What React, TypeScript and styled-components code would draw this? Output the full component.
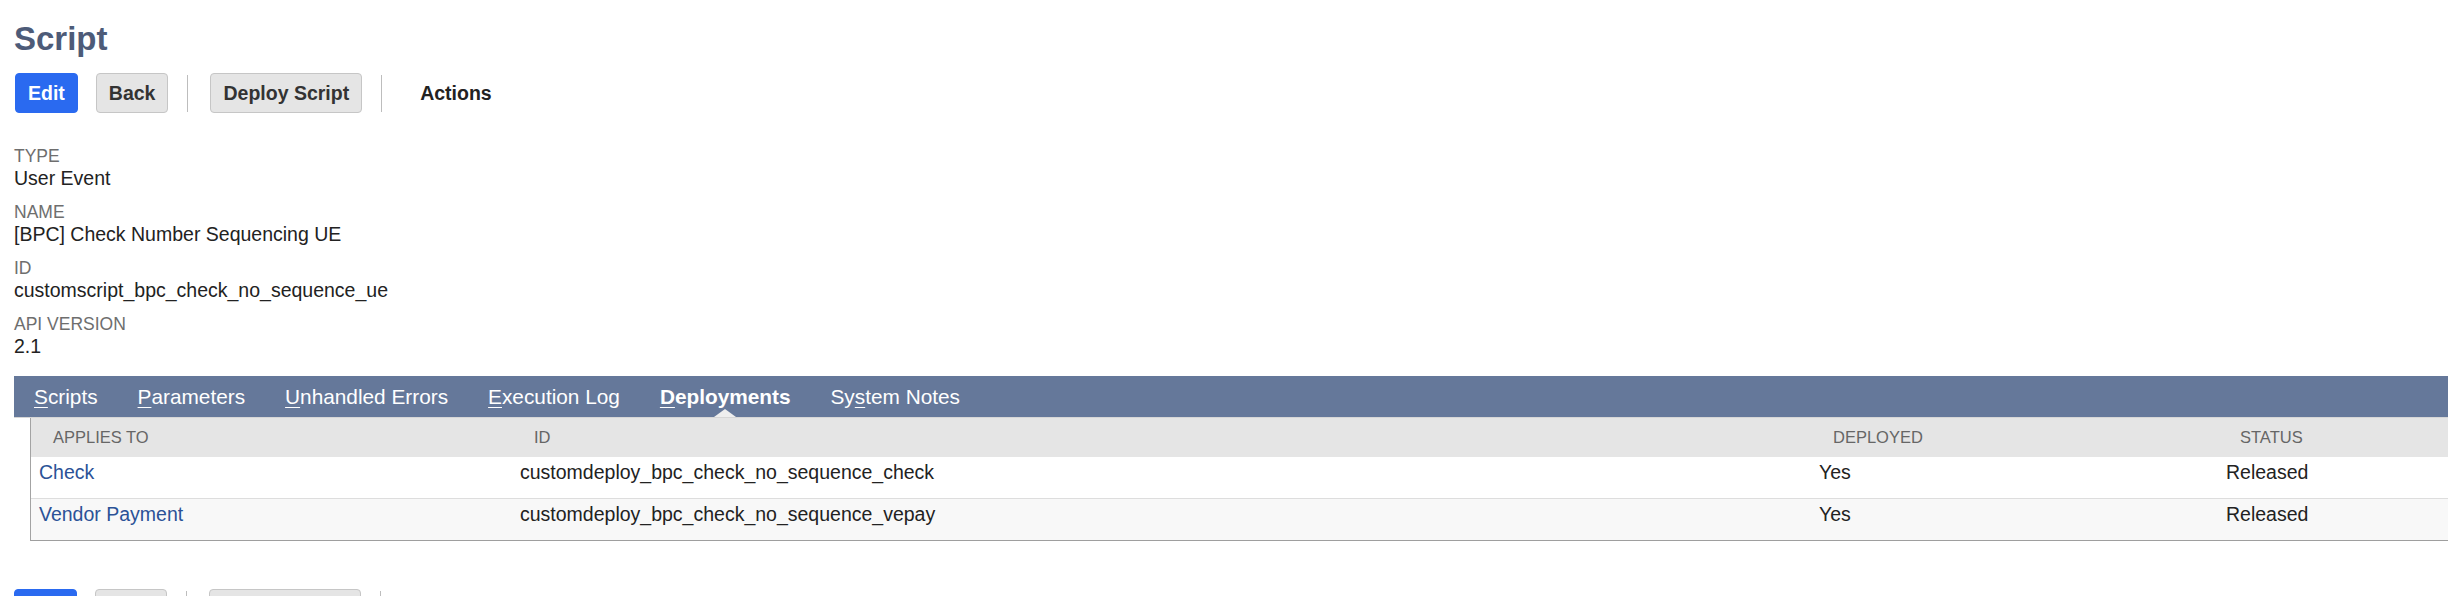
import React from "react";
import styled, { createGlobalStyle } from "styled-components";

const GlobalStyle = createGlobalStyle`
  html, body {
    margin: 0;
    padding: 0;
    background: #ffffff;
    overflow: hidden;
  }
  body {
    font-family: "Liberation Sans", Arial, Helvetica, sans-serif;
    color: #222222;
  }
`;

const Page = styled.div`
  padding: 19px 0 0 14px;
  width: 2434px;
`;

const Title = styled.h1`
  margin: 0;
  font-size: 33px;
  line-height: 40px;
  font-weight: 700;
  color: #4d5b78;
`;

const ButtonRow = styled.div<{ $top: number }>`
  display: flex;
  align-items: center;
  gap: 18px;
  height: 40px;
  margin-top: ${(p) => p.$top}px;
  padding-left: 1px;
`;

const Button = styled.button<{ $variant: "primary" | "secondary" | "plain" }>`
  box-sizing: border-box;
  height: 40px;
  padding: 0 12px;
  margin-left: ${(p) => (p.$variant === "plain" ? "3px" : "0")};
  border-radius: 4px;
  font-family: "Liberation Sans", Arial, sans-serif;
  font-size: 19.5px;
  font-weight: 700;
  cursor: pointer;
  border: 1px solid
    ${(p) =>
      p.$variant === "primary"
        ? "#2a6af0"
        : p.$variant === "secondary"
        ? "#c6c6c6"
        : "transparent"};
  background: ${(p) =>
    p.$variant === "primary"
      ? "#2a6af0"
      : p.$variant === "secondary"
      ? "#e5e5e5"
      : "transparent"};
  color: ${(p) =>
    p.$variant === "primary" ? "#ffffff" : p.$variant === "secondary" ? "#333333" : "#222222"};
`;

const Separator = styled.span`
  display: block;
  width: 1px;
  height: 37px;
  background: #bdbdbd;
  margin: 0 4px 0 1px;
`;

const Fields = styled.div`
  margin-top: 33px;
  display: flex;
  flex-direction: column;
  gap: 11px;
`;

const Field = styled.div`
  display: flex;
  flex-direction: column;
`;

const Label = styled.div`
  font-size: 17.5px;
  line-height: 20px;
  color: #6e6e6e;
  text-transform: uppercase;
`;

const Value = styled.div`
  font-size: 19.5px;
  line-height: 25px;
  color: #222222;
`;

const TabBar = styled.div`
  margin-top: 17px;
  display: flex;
  height: 41px;
  background: #65789a;
  border-bottom: 1px solid #d6d6d6;
`;

const Tab = styled.div<{ $active?: boolean }>`
  position: relative;
  padding: 1px 20px 0;
  font-size: 20.8px;
  line-height: 40px;
  color: #ffffff;
  font-weight: ${(p) => (p.$active ? 700 : 400)};
  white-space: nowrap;
  &::after {
    content: "";
    display: ${(p) => (p.$active ? "block" : "none")};
    position: absolute;
    left: 50%;
    bottom: 0;
    transform: translateX(-50%);
    width: 0;
    height: 0;
    border-left: 11px solid transparent;
    border-right: 11px solid transparent;
    border-bottom: 8px solid #eeeeee;
  }
`;

const Key = styled.span`
  text-decoration: underline;
  text-underline-offset: 3px;
  text-decoration-thickness: 1px;
`;

const Panel = styled.div`
  margin-left: 16px;
  border-left: 1px solid #a3a3a3;
  border-bottom: 1px solid #9e9e9e;
`;

const GridRow = styled.div<{ $bg: string; $sep?: boolean }>`
  display: grid;
  grid-template-columns: 481px 1299px 407px 1fr;
  background: ${(p) => p.$bg};
  border-top: ${(p) => (p.$sep ? "1px solid #dddddd" : "none")};
`;

const HeadCell = styled.div`
  padding-left: 22px;
  font-size: 16.5px;
  line-height: 39px;
  color: #666666;
  text-transform: uppercase;
`;

const Cell = styled.div`
  padding: 4px 8px 14px;
  font-size: 19.5px;
  line-height: 23px;
  color: #222222;
`;

const Link = styled.a`
  color: #2b5297;
  text-decoration: none;
`;

const BottomRow = styled(ButtonRow)`
  margin-top: 48px;
  padding-left: 0;
`;

const tabs: { key: string; rest: string; active?: boolean }[] = [
  { key: "S", rest: "cripts" },
  { key: "P", rest: "arameters" },
  { key: "U", rest: "nhandled Errors" },
  { key: "E", rest: "xecution Log" },
  { key: "D", rest: "eployments", active: true },
];

const fields = [
  { label: "Type", value: "User Event" },
  { label: "Name", value: "[BPC] Check Number Sequencing UE" },
  { label: "ID", value: "customscript_bpc_check_no_sequence_ue" },
  { label: "API Version", value: "2.1" },
];

const deployments = [
  { applies: "Check", id: "customdeploy_bpc_check_no_sequence_check", deployed: "Yes", status: "Released" },
  { applies: "Vendor Payment", id: "customdeploy_bpc_check_no_sequence_vepay", deployed: "Yes", status: "Released" },
];

function Buttons() {
  return (
    <>
      <Button $variant="primary">Edit</Button>
      <Button $variant="secondary">Back</Button>
      <Separator />
      <Button $variant="secondary">Deploy Script</Button>
      <Separator />
      <Button $variant="plain">Actions</Button>
    </>
  );
}

export default function App() {
  return (
    <>
      <GlobalStyle />
      <Page>
        <Title>Script</Title>
        <ButtonRow $top={14}>
          <Buttons />
        </ButtonRow>
        <Fields>
          {fields.map((f) => (
            <Field key={f.label}>
              <Label>{f.label}</Label>
              <Value>{f.value}</Value>
            </Field>
          ))}
        </Fields>
        <TabBar>
          {tabs.map((t) => (
            <Tab key={t.key} $active={t.active}>
              <Key>{t.key}</Key>
              {t.rest}
            </Tab>
          ))}
          <Tab>
            Sy<Key>s</Key>tem Notes
          </Tab>
        </TabBar>
        <Panel>
          <GridRow $bg="#e5e5e5">
            <HeadCell>Applies To</HeadCell>
            <HeadCell>ID</HeadCell>
            <HeadCell>Deployed</HeadCell>
            <HeadCell>Status</HeadCell>
          </GridRow>
          {deployments.map((d, i) => (
            <GridRow key={d.id} $bg={i % 2 ? "#f8f8f8" : "#ffffff"} $sep={i > 0}>
              <Cell>
                <Link href="#">{d.applies}</Link>
              </Cell>
              <Cell>{d.id}</Cell>
              <Cell>{d.deployed}</Cell>
              <Cell>{d.status}</Cell>
            </GridRow>
          ))}
        </Panel>
        <BottomRow $top={48}>
          <Buttons />
        </BottomRow>
      </Page>
    </>
  );
}
